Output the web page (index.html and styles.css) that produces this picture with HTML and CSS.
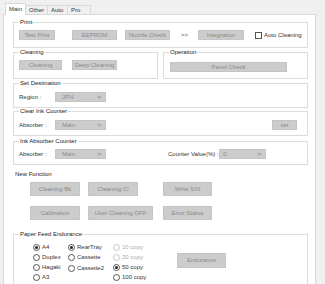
FILE: index.html
```html
<!DOCTYPE html>
<html>
<head>
<meta charset="utf-8">
<link rel="stylesheet" href="styles.css">
</head>
<body>
<div class="tabs">
  <div class="tab active">Main</div>
  <div class="tab t-other">Other</div>
  <div class="tab t-auto">Auto</div>
  <div class="tab t-pro">Pro</div>
</div>
<div class="panel">
  <div class="group g-print">
    <span class="legend">Print</span>
    <div class="row r-print">
      <div class="btn b-test">Test Print</div>
      <div class="btn b-eeprom">EEPROM</div>
      <div class="btn b-nozzle">Nozzle Check</div>
      <span class="arrows">&gt;&gt;</span>
      <div class="btn b-integ">Integration</div>
      <span class="check"></span>
      <span class="check-label">Auto Cleaning</span>
    </div>
  </div>

  <div class="pair">
    <div class="group g-clean">
      <span class="legend">Cleaning</span>
      <div class="row r-clean">
        <div class="btn b-clean">Cleaning</div>
        <div class="btn b-deep">Deep Cleaning</div>
      </div>
    </div>
    <div class="group g-oper">
      <span class="legend">Operation</span>
      <div class="row r-oper">
        <div class="btn b-panel">Panel Check</div>
      </div>
    </div>
  </div>

  <div class="group g-dest">
    <span class="legend">Set Destination</span>
    <div class="row r-dest">
      <span class="lbl">Region :</span>
      <div class="combo c-main"><span>JPN</span><i class="chev"></i></div>
    </div>
  </div>

  <div class="group g-clear">
    <span class="legend">Clear Ink Counter</span>
    <div class="row r-clear">
      <span class="lbl">Absorber :</span>
      <div class="combo c-main"><span>Main</span><i class="chev"></i></div>
      <div class="btn b-set">set</div>
    </div>
  </div>

  <div class="group g-ink">
    <span class="legend">Ink Absorber Counter</span>
    <div class="row r-ink">
      <span class="lbl">Absorber :</span>
      <div class="combo c-main"><span>Main</span><i class="chev"></i></div>
      <span class="lbl l-counter">Counter Value(%) :</span>
      <div class="combo c-val"><span>0</span><i class="chev"></i></div>
    </div>
  </div>

  <div class="newfn">New Function</div>
  <div class="row nf-row1">
    <div class="btn nf b-bk">Cleaning Bk</div>
    <div class="btn nf b-cl">Cleaning Cl</div>
    <div class="btn nf b-sn">Write S/N</div>
  </div>
  <div class="row nf-row2">
    <div class="btn nf b-cal">Calibration</div>
    <div class="btn nf b-uco">User Cleaning OFF</div>
    <div class="btn nf b-err">Error Status</div>
  </div>

  <div class="group g-paper">
    <span class="legend">Paper Feed Endurance</span>
    <div class="row r-paper">
      <div class="col col1">
        <div class="radio on"><i></i><span>A4</span></div>
        <div class="radio"><i></i><span>Duplex</span></div>
        <div class="radio"><i></i><span>Hagaki</span></div>
        <div class="radio"><i></i><span>A3</span></div>
      </div>
      <div class="col col2">
        <div class="radio on"><i></i><span>RearTray</span></div>
        <div class="radio"><i></i><span>Cassette</span></div>
        <div class="radio r-cas2"><i></i><span>Cassette2</span></div>
      </div>
      <div class="col col3">
        <div class="radio dis"><i></i><span>10 copy</span></div>
        <div class="radio dis"><i></i><span>20 copy</span></div>
        <div class="radio on"><i></i><span>50 copy</span></div>
        <div class="radio"><i></i><span>100 copy</span></div>
      </div>
      <div class="btn b-endur">Endurance</div>
    </div>
  </div>
</div>
</body>
</html>
```
FILE: styles.css
```css
* { box-sizing: border-box; }
html, body {
  margin: 0;
  padding: 0;
  background: #f0f0f0;
  width: 325px;
  height: 284px;
  overflow: hidden;
  font-family: "Liberation Sans", Arial, sans-serif;
  font-size: 6px;
  color: #333;
}

.tabs {
  display: flex;
  align-items: flex-end;
  height: 14px;
  padding-left: 5px;
}
.tab {
  height: 9px;
  line-height: 8px;
  padding-left: 3px;
  border: 1px solid #d9d9d9;
  border-bottom: none;
  background: #f0f0f0;
  margin-left: -1px;
}
.tab.active {
  height: 12px;
  margin-left: 0;
  margin-bottom: -1px;
  width: 21px;
  background: #fff;
  position: relative;
  z-index: 2;
  line-height: 11px;
  padding-left: 3px;
}
.t-other { width: 23px; }
.t-auto { width: 21px; }
.t-pro { width: 24px; }

.panel {
  margin-left: 3px;
  width: 313px;
  height: 280px;
  background: #fff;
  border: 1px solid #d9d9d9;
  padding-left: 9px;
  position: relative;
  z-index: 1;
}

.group {
  border: 1px solid #dcdcdc;
  width: 295px;
}
.legend {
  display: block;
  width: fit-content;
  height: 7px;
  line-height: 7px;
  margin: -4px 0 0 5px;
  padding: 0 1px;
  background: #fff;
  color: #222;
}

.row { display: flex; align-items: center; }

.btn {
  height: 10px;
  line-height: 8px;
  background: #cccccc;
  border: 1px solid #c4c4c4;
  color: #8a8a8a;
  text-align: center;
  white-space: nowrap;
}

/* Print */
.g-print { margin-top: 7px; height: 26px; }
.r-print { margin-top: 4px; padding-left: 5px; }
.b-test { width: 36px; }
.b-eeprom { width: 45px; margin-left: 17px; }
.b-nozzle { width: 45px; margin-left: 8px; }
.arrows { margin-left: 11px; color: #333; }
.b-integ { width: 46px; margin-left: 10px; }
.check {
  width: 7px; height: 7px;
  border: 1px solid #555;
  margin-left: 11px;
  background: #fff;
}
.check-label { margin-left: 2px; color: #333; }

/* Cleaning / Operation */
.pair { display: flex; margin-top: 4px; }
.g-clean { width: 145px; height: 27px; }
.g-oper { width: 145px; height: 27px; margin-left: 5px; }
.r-clean { margin-top: 4px; padding-left: 5px; }
.b-clean { width: 43px; }
.b-deep { width: 45px; margin-left: 10px; }
.r-oper { margin-top: 6px; padding-left: 6px; }
.b-panel { width: 117px; }

/* Combos */
.lbl { color: #333; width: 36px; white-space: nowrap; }
.combo {
  height: 10px;
  background: #cccccc;
  border: 1px solid #c4c4c4;
  display: flex;
  align-items: center;
  justify-content: space-between;
  padding: 0 4px 0 6px;
  color: #8a8a8a;
}
.c-main { width: 51px; }
.c-val { width: 47px; padding-left: 3px; }
.chev {
  width: 3px; height: 3px;
  border-right: 1px solid #9a9a9a;
  border-bottom: 1px solid #9a9a9a;
  transform: rotate(45deg);
  margin-top: -2px;
}

.g-dest { margin-top: 4px; height: 25px; }
.r-dest { margin-top: 5px; padding-left: 5px; }
.g-clear { margin-top: 3px; height: 25px; }
.r-clear { margin-top: 5px; padding-left: 5px; }
.b-set { width: 25px; margin-left: 166px; }
.g-ink { margin-top: 5px; height: 24px; }
.r-ink { margin-top: 4px; padding-left: 5px; }
.l-counter { width: 51px; margin-left: 62px; }

/* New Function */
.newfn {
  margin-top: 6px;
  margin-left: 2px;
  height: 7px;
  line-height: 7px;
  color: #222;
}
.btn.nf { height: 14px; line-height: 12px; }
.nf-row1 { margin-top: 4px; padding-left: 17px; }
.nf-row2 { margin-top: 10px; padding-left: 17px; }
.b-bk, .b-cal { width: 50px; }
.b-cl { width: 50px; margin-left: 8px; }
.b-uco { width: 65px; margin-left: 8px; }
.b-sn { width: 49px; margin-left: 25px; }
.b-err { width: 49px; margin-left: 10px; }

/* Paper Feed */
.g-paper { margin-top: 14px; height: 60px; }
.r-paper { margin-top: 4px; padding-left: 19px; align-items: flex-start; }
.col { display: flex; flex-direction: column; }
.col1 { width: 35px; }
.col2 { width: 45px; }
.col3 { width: 64px; }
.radio {
  height: 10px;
  display: flex;
  align-items: center;
  color: #333;
  white-space: nowrap;
}
.radio i {
  width: 7px; height: 7px;
  border: 1px solid #555;
  border-radius: 50%;
  background: #fff;
  display: flex;
  align-items: center;
  justify-content: center;
  margin-right: 2px;
}
.radio.on i::after {
  content: "";
  width: 3px; height: 3px;
  border-radius: 50%;
  background: #222;
}
.radio.dis { color: #aaaaaa; }
.radio.dis i { border-color: #c8c8c8; }
.r-cas2 { margin-top: 1px; }
.b-endur { width: 49px; height: 15px; line-height: 13px; margin-top: 11px; }
```
